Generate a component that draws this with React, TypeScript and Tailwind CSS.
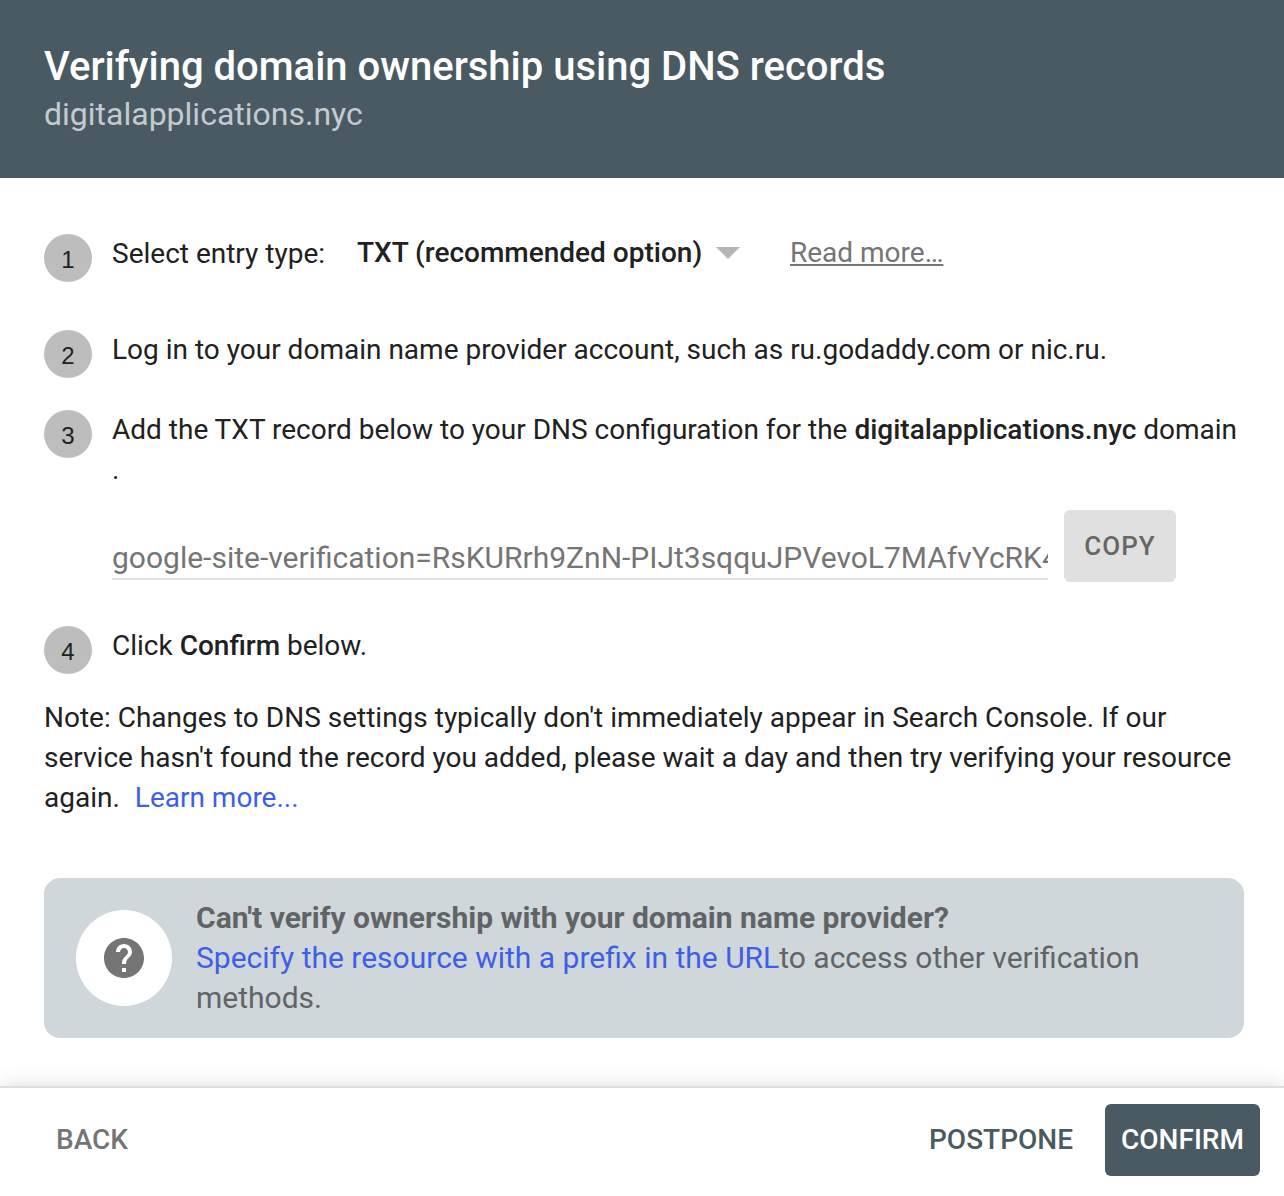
import type { ReactNode } from "react";

function Step({ number, children }: { number: number; children: ReactNode }) {
  return (
    <div className="flex items-start">
      <div className="mr-5 flex size-12 shrink-0 items-center justify-center rounded-full bg-[#bdbdbd] pt-1 font-['Liberation_Sans',sans-serif] text-2xl">
        {number}
      </div>
      {children}
    </div>
  );
}

export default function App() {
  return (
    <main className="flex h-[1196px] w-[1284px] flex-col overflow-hidden bg-white font-[Roboto,sans-serif] text-[28px] leading-10 text-[#212121]">
      <header className="h-[178px] shrink-0 bg-[#4a5a62] px-11 pt-[43px] text-white">
        <h1 className="text-[40px] leading-[48px] font-medium">
          Verifying domain ownership using DNS records
        </h1>
        <p className="mt-[3px] text-[32px] leading-10 text-[#c3cbd0]">
          digitalapplications.nyc
        </p>
      </header>

      <section className="h-[908px] shrink-0 px-11 pt-14">
        <div className="h-24">
          <Step number={1}>
            <div className="flex whitespace-nowrap">
              <span className="w-[245px]">Select entry type:</span>
              <span className="-mt-px w-[359px] font-medium">TXT (recommended option)</span>
              <svg className="mt-[13px]" width="24" height="12" viewBox="0 0 24 12">
                <path d="M0 0h24L12 12z" fill="#b5b5b5" />
              </svg>
              <a
                href="#"
                className="-mt-px ml-[50px] text-[#757575] underline decoration-2 underline-offset-[2px]"
              >
                Read more…
              </a>
            </div>
          </Step>
        </div>
        <div className="h-20">
          <Step number={2}>
            <p>Log in to your domain name provider account, such as ru.godaddy.com or nic.ru.</p>
          </Step>
        </div>
        <div className="h-[100px]">
          <Step number={3}>
            <p className="whitespace-nowrap">
              Add the TXT record below to your DNS configuration for the{" "}
              <strong className="font-medium">digitalapplications.nyc</strong> domain
              <br />.
            </p>
          </Step>
        </div>
        <div className="ml-[68px] flex h-[116px] items-start">
          <input
            readOnly
            value="google-site-verification=RsKURrh9ZnN-PIJt3sqquJPVevoL7MAfvYcRK4"
            className="mt-7 h-[42px] w-[936px] border-b-2 border-[#e0e0e0] pb-0.5 text-[30px] leading-[38px] text-[#757575] outline-none"
          />
          <button className="ml-4 h-[72px] w-28 rounded-md bg-[#e0e0e0] text-[26px] font-medium tracking-[1px] text-[#666666]">
            COPY
          </button>
        </div>
        <Step number={4}>
          <p>
            Click <strong className="font-medium">Confirm</strong> below.
          </p>
        </Step>

        <p className="mt-6 whitespace-nowrap">
          Note: Changes to DNS settings typically don't immediately appear in Search Console. If our
          <br />
          service hasn't found the record you added, please wait a day and then try verifying your resource
          <br />
          again. <a href="#" className="ml-2 text-[#3d5fe8]">Learn more...</a>
        </p>

        <aside className="mt-[60px] flex h-40 w-[1200px] items-center rounded-2xl bg-[#d0d7da] pl-8 text-[30px] text-[#616467]">
          <div className="mr-6 flex size-24 items-center justify-center rounded-full bg-white">
            <svg width="48" height="48" viewBox="0 0 24 24" fill="#757575">
              <path d="M12 2C6.48 2 2 6.48 2 12s4.48 10 10 10 10-4.48 10-10S17.52 2 12 2zm1 17h-2v-2h2v2zm2.07-7.75l-.9.92C13.45 12.9 13 13.5 13 15h-2v-.5c0-1.1.45-2.1 1.17-2.83l1.24-1.26c.37-.36.59-.86.59-1.41 0-1.1-.9-2-2-2s-2 .9-2 2H8c0-2.21 1.79-4 4-4s4 1.79 4 4c0 .88-.36 1.68-.93 2.25z" />
            </svg>
          </div>
          <div className="whitespace-nowrap">
            <strong className="font-bold">Can't verify ownership with your domain name provider?</strong>
            <p>
              <a href="#" className="text-[#3d5fe8]">Specify the resource with a prefix in the URL</a>
              to access other verification
              <br />
              methods.
            </p>
          </div>
        </aside>
      </section>

      <footer className="flex h-[110px] shrink-0 items-start border-t-2 border-[#dedede] bg-white pt-4 pr-6 pl-14 font-medium shadow-[0_0_20px_rgba(0,0,0,0.14)]">
        <button className="h-[72px] text-[#757575]">BACK</button>
        <button className="mr-8 ml-auto h-[72px] text-[#4a5a62]">POSTPONE</button>
        <button className="h-[72px] w-[155px] rounded-md bg-[#4a5a62] text-white">CONFIRM</button>
      </footer>
    </main>
  );
}
